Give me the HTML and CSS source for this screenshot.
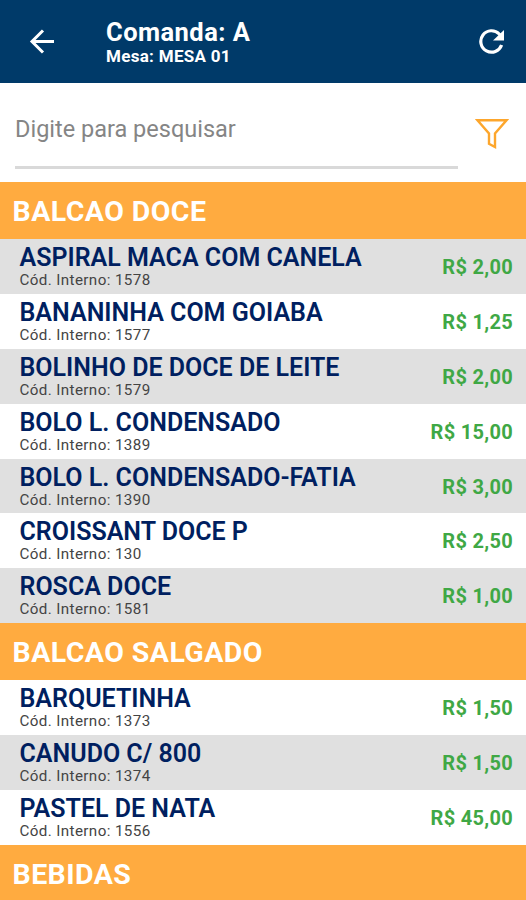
FILE: index.html
```html
<!DOCTYPE html>
<html lang="pt-BR">
<head>
    <meta charset="UTF-8">
    <meta name="viewport" content="width=device-width, initial-scale=1.0">
    <title>Comanda</title>
    <link rel="stylesheet" href="styles.css">
</head>
<body>

<header class="topbar">
    <button class="icon-btn back-btn" aria-label="Voltar">
        <svg width="26" height="26" viewBox="0 0 26 26" fill="none" stroke="#fff" stroke-width="3">
            <path d="M25 13.5H3M14 2.5l-11 11 11 11"/>
        </svg>
    </button>
    <div class="topbar-text">
        <h1>Comanda: A</h1>
        <p>Mesa: MESA 01</p>
    </div>
    <button class="icon-btn refresh-btn" aria-label="Atualizar">
        <svg width="26" height="26" viewBox="0 0 26 26" fill="none" stroke="#fff" stroke-width="3.2">
            <path d="M22.6 17A10.7 10.7 0 1 1 20.2 6L22 8"/>
            <path d="M25 2v10.5H14z" fill="#fff" stroke="none"/>
        </svg>
    </button>
</header>

<div class="search">
    <input type="text" class="search-input" placeholder="Digite para pesquisar">
    <button class="icon-btn filter-btn" aria-label="Filtrar">
        <svg width="34" height="32" viewBox="0 0 34 32" fill="none" stroke="#fda62c" stroke-width="2.4">
            <path d="M2.5 2.2h29L20 15.5v13.6l-6-3.2V15.5z"/>
        </svg>
    </button>
</div>

<main>
    <h2 class="group">BALCAO DOCE</h2>
    <ul class="items odd">
        <li class="item">
            <div><div class="name">ASPIRAL MACA COM CANELA</div><div class="code">Cód. Interno: 1578</div></div>
            <span class="price">R$ 2,00</span>
        </li>
        <li class="item">
            <div><div class="name">BANANINHA COM GOIABA</div><div class="code">Cód. Interno: 1577</div></div>
            <span class="price">R$ 1,25</span>
        </li>
        <li class="item">
            <div><div class="name">BOLINHO DE DOCE DE LEITE</div><div class="code">Cód. Interno: 1579</div></div>
            <span class="price">R$ 2,00</span>
        </li>
        <li class="item">
            <div><div class="name">BOLO L. CONDENSADO</div><div class="code">Cód. Interno: 1389</div></div>
            <span class="price">R$ 15,00</span>
        </li>
        <li class="item">
            <div><div class="name">BOLO L. CONDENSADO-FATIA</div><div class="code">Cód. Interno: 1390</div></div>
            <span class="price">R$ 3,00</span>
        </li>
        <li class="item">
            <div><div class="name">CROISSANT DOCE P</div><div class="code">Cód. Interno: 130</div></div>
            <span class="price">R$ 2,50</span>
        </li>
        <li class="item">
            <div><div class="name">ROSCA DOCE</div><div class="code">Cód. Interno: 1581</div></div>
            <span class="price">R$ 1,00</span>
        </li>
    </ul>

    <h2 class="group">BALCAO SALGADO</h2>
    <ul class="items even">
        <li class="item">
            <div><div class="name">BARQUETINHA</div><div class="code">Cód. Interno: 1373</div></div>
            <span class="price">R$ 1,50</span>
        </li>
        <li class="item">
            <div><div class="name">CANUDO C/ 800</div><div class="code">Cód. Interno: 1374</div></div>
            <span class="price">R$ 1,50</span>
        </li>
        <li class="item">
            <div><div class="name">PASTEL DE NATA</div><div class="code">Cód. Interno: 1556</div></div>
            <span class="price">R$ 45,00</span>
        </li>
    </ul>

    <h2 class="group">BEBIDAS</h2>
</main>

</body>
</html>
```
FILE: styles.css
```css
* {
    box-sizing: border-box;
}
body {
    font-family: Roboto, sans-serif;
    background-color: #fff;
    margin: 0;
    height: 100vh;
    overflow: hidden;
}
h1, h2, p, ul {
    margin: 0;
    padding: 0;
}
.icon-btn {
    background: none;
    border: none;
    padding: 0;
    display: flex;
    cursor: pointer;
}
.topbar {
    display: flex;
    align-items: center;
    height: 82.5px;
    padding: 0 21px 0 29px;
    background-color: #003a69;
    color: #fff;
}
.topbar-text {
    flex: 1;
    margin-left: 51px;
    padding-top: 4px;
}
.topbar h1 {
    font-size: 25.5px;
    line-height: 27px;
    font-weight: 700;
    letter-spacing: 0.45px;
}
.topbar p {
    font-size: 17px;
    line-height: 21px;
    font-weight: 700;
    letter-spacing: 0.3px;
}
.search {
    display: flex;
    align-items: flex-start;
    height: 99.5px;
    padding: 9.5px 17px 0 15px;
}
.search-input {
    flex: 1;
    height: 77px;
    padding: 0;
    border: none;
    border-bottom: 3px solid #d9d9d9;
    background: none;
    font-family: inherit;
    font-size: 23.5px;
    outline: none;
}
.search-input::placeholder {
    color: #858585;
}
.filter-btn {
    margin: 26px 0 0 17px;
}
.group {
    height: 57px;
    padding: 1px 0 0 12.5px;
    background-color: #ffab40;
    color: #fff;
    font-size: 28.5px;
    line-height: 57px;
    font-weight: 700;
    letter-spacing: 0.45px;
}
.items {
    list-style: none;
}
.item {
    display: flex;
    justify-content: space-between;
    align-items: center;
    height: 54.9px;
    padding: 0 13px 0 19.5px;
}
.odd .item:nth-child(odd),
.even .item:nth-child(even) {
    background-color: #e0e0e0;
}
.name {
    color: #001f60;
    font-size: 25px;
    line-height: 28px;
    font-weight: 600;
}
.code {
    color: #444;
    font-size: 15.2px;
    line-height: 17px;
    letter-spacing: 0.38px;
}
.price {
    padding-top: 1px;
    color: #3fa845;
    font-size: 20px;
    font-weight: 700;
    letter-spacing: 0.3px;
}
```
